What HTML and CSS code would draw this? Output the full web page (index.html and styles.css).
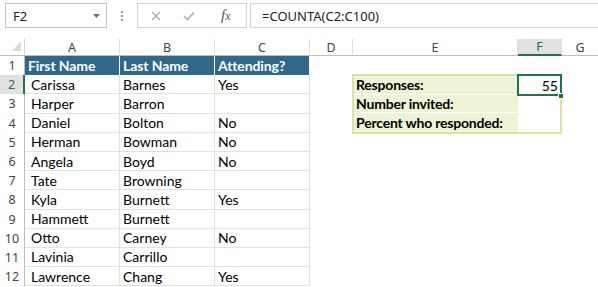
FILE: index.html
```html
<!DOCTYPE html>
<html>
<head>
  <title>Event Responses</title>
  <link rel="stylesheet" href="styles.css">
</head>
<body>
  <!-- Formula bar -->
  <div class="topbar">
    <div class="namebox">
      <span>F2</span>
      <svg width="7" height="4" viewBox="0 0 7 4"><path d="M0 0H7L3.5 4Z" fill="#6f6f6f"/></svg>
    </div>
    <div class="grip"><i></i><i></i><i></i></div>
    <div class="fbuttons">
      <svg class="ico-x" width="10" height="10" viewBox="0 0 10 10"><path d="M1 1L9 9M9 1L1 9" stroke="#a9a9a9" stroke-width="1.3" fill="none"/></svg>
      <svg class="ico-ok" width="12" height="10" viewBox="0 0 12 10"><path d="M1 5.2L4.4 8.6L11 1.4" stroke="#b5b5b5" stroke-width="1.8" fill="none"/></svg>
      <span class="fx">f<i>x</i></span>
    </div>
    <div class="formula">=COUNTA(C2:C100)</div>
  </div>

  <!-- Worksheet -->
  <div class="sheet">
    <div class="corner"><svg width="9" height="10" viewBox="0 0 9 10"><path d="M9 0V10H0Z" fill="#dadada"/></svg></div>
    <div class="colhead">A</div>
    <div class="colhead">B</div>
    <div class="colhead">C</div>
    <div class="colhead">D</div>
    <div class="colhead">E</div>
    <div class="colhead active">F</div>
    <div class="colhead last">G</div>

    <div class="rowhead">1</div>
    <div class="hcell first">First Name</div>
    <div class="hcell">Last Name</div>
    <div class="hcell">Attending?</div>
    <div class="blank wide"></div>

    <div class="summary">
      <div class="label">Responses:</div>
      <div class="value selected">55<span class="handle"></span></div>
      <div class="label">Number invited:</div>
      <div class="value"></div>
      <div class="label last">Percent who responded:</div>
      <div class="value"></div>
    </div>

    <div class="rowhead active">2</div>
    <div class="cell first">Carissa</div>
    <div class="cell">Barnes</div>
    <div class="cell">Yes</div>
    <div class="blank"></div>
    <div class="blank"></div>

    <div class="rowhead">3</div>
    <div class="cell first">Harper</div>
    <div class="cell">Barron</div>
    <div class="cell"></div>
    <div class="blank"></div>
    <div class="blank"></div>

    <div class="rowhead">4</div>
    <div class="cell first">Daniel</div>
    <div class="cell">Bolton</div>
    <div class="cell">No</div>
    <div class="blank"></div>
    <div class="blank"></div>

    <div class="rowhead">5</div>
    <div class="cell first">Herman</div>
    <div class="cell">Bowman</div>
    <div class="cell">No</div>
    <div class="blank wide"></div>

    <div class="rowhead">6</div>
    <div class="cell first">Angela</div>
    <div class="cell">Boyd</div>
    <div class="cell">No</div>
    <div class="blank wide"></div>

    <div class="rowhead">7</div>
    <div class="cell first">Tate</div>
    <div class="cell">Browning</div>
    <div class="cell"></div>
    <div class="blank wide"></div>

    <div class="rowhead">8</div>
    <div class="cell first">Kyla</div>
    <div class="cell">Burnett</div>
    <div class="cell">Yes</div>
    <div class="blank wide"></div>

    <div class="rowhead">9</div>
    <div class="cell first">Hammett</div>
    <div class="cell">Burnett</div>
    <div class="cell"></div>
    <div class="blank wide"></div>

    <div class="rowhead">10</div>
    <div class="cell first">Otto</div>
    <div class="cell">Carney</div>
    <div class="cell">No</div>
    <div class="blank wide"></div>

    <div class="rowhead">11</div>
    <div class="cell first">Lavinia</div>
    <div class="cell">Carrillo</div>
    <div class="cell"></div>
    <div class="blank wide"></div>

    <div class="rowhead">12</div>
    <div class="cell first">Lawrence</div>
    <div class="cell">Chang</div>
    <div class="cell">Yes</div>
    <div class="blank wide"></div>
  </div>
</body>
</html>
```

FILE: styles.css
```css
/* Reset styles */
*,
*::before,
*::after {
  box-sizing: border-box;
  margin: 0;
  padding: 0;
}

body {
  font-family: Lato, "Liberation Sans", sans-serif;
  font-size: 14px;
  background-color: #fff;
  color: #000;
  width: 598px;
  height: 287px;
  overflow: hidden;
}

/* Formula bar */
.topbar {
  display: flex;
  align-items: center;
  height: 25px;
  margin-top: 3px;
  padding-left: 5px;
  font-family: "Noto Sans", sans-serif;
}

.namebox {
  width: 102px;
  height: 25px;
  border: 1px solid #c6c6c6;
  display: flex;
  align-items: center;
  justify-content: space-between;
  padding: 0 6px 0 7px;
  font-size: 13px;
  color: #222;
}

.grip {
  width: 30px;
  display: flex;
  flex-direction: column;
  align-items: center;
  gap: 2px;
}

.grip i {
  width: 2px;
  height: 2px;
  background-color: #9a9a9a;
}

.fbuttons {
  width: 110px;
  height: 25px;
  border: 1px solid #d4d4d4;
  display: flex;
  align-items: center;
  padding-left: 13px;
}

.ico-ok {
  margin-left: 22px;
}

.fx {
  margin-left: 26px;
  font-family: "Liberation Serif", serif;
  font-style: italic;
  font-size: 15px;
  color: #555;
}

.fx i {
  font-size: 12px;
}

.formula {
  flex: 1;
  height: 25px;
  margin-left: 3px;
  border: 1px solid #d4d4d4;
  border-right: none;
  padding-left: 11px;
  display: flex;
  align-items: center;
  font-size: 13px;
  color: #222;
}

/* Worksheet grid */
.sheet {
  display: grid;
  grid-template-columns: 25px 95px 95px 95px 43px 165px 44px 36px;
  grid-template-rows: 17px repeat(12, 19.2px);
  margin-top: 11px;
}

.corner {
  display: flex;
  justify-content: flex-end;
  align-items: flex-end;
  padding: 0 3px 4px 0;
  border-right: 1px solid #d4d4d4;
  border-bottom: 1px solid #bdbdbd;
}

.colhead {
  display: flex;
  align-items: center;
  justify-content: center;
  font-family: "Noto Sans", sans-serif;
  font-size: 12.5px;
  color: #444;
  border-right: 1px solid #dedede;
  border-bottom: 1px solid #bdbdbd;
}

.colhead.last {
  border-right: none;
}

.colhead.active {
  background-color: #e1e1e1;
  color: #217346;
  border-bottom: 2px solid #217346;
}

.rowhead {
  display: flex;
  align-items: center;
  justify-content: center;
  font-family: "Noto Sans", sans-serif;
  font-size: 12.5px;
  color: #444;
  border-right: 1px solid #bdbdbd;
}

.rowhead.active {
  background-color: #e1e1e1;
  color: #217346;
  border-right: 2px solid #217346;
}

.hcell,
.cell {
  display: flex;
  align-items: center;
  padding-left: 3px;
  white-space: nowrap;
}

.hcell {
  background-color: #30688a;
  color: #fff;
  font-weight: bold;
  letter-spacing: -0.1px;
  border-right: 1px solid #fff;
}

.cell {
  border-right: 1px solid #e1e1e1;
  border-bottom: 1px solid #e1e1e1;
}

.cell.first {
  padding-left: 6px;
}

.blank.wide {
  grid-column: span 4;
}

/* Summary block E2:F4 */
.summary {
  grid-column: 6 / 8;
  grid-row: 3 / 6;
  margin: -1px 0 -1px -1px;
  border: 2px solid #d9e5a3;
  display: grid;
  grid-template-columns: 164px 42px;
  grid-template-rows: repeat(3, 1fr);
}

.label {
  display: flex;
  align-items: center;
  padding-left: 2px;
  background-color: #eef3d5;
  border-bottom: 1px solid #fff;
  font-weight: bold;
  letter-spacing: -0.2px;
  white-space: nowrap;
}

.label.last {
  border-bottom: none;
}

.value {
  display: flex;
  align-items: center;
  justify-content: flex-end;
  padding-right: 2px;
  position: relative;
}

.value.selected::before {
  content: "";
  position: absolute;
  left: -1px;
  right: -2px;
  top: -2px;
  bottom: -1px;
  border: 2px solid #217346;
}

.handle {
  position: absolute;
  right: -4px;
  bottom: -4px;
  width: 6px;
  height: 6px;
  background-color: #217346;
  border: 1px solid #fff;
}
```
